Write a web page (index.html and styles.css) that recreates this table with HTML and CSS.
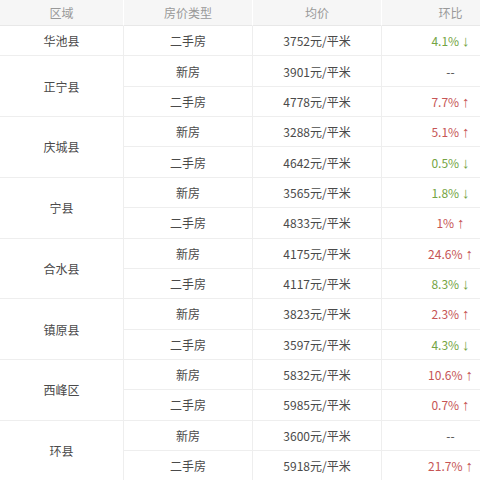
FILE: index.html
```html
<!DOCTYPE html>
<html lang="zh">
<head>
<meta charset="utf-8">
<link rel="stylesheet" href="styles.css">
</head>
<body>
<div class="frame">
<div class="table">
  <div class="th">区域</div><div class="th">房价类型</div><div class="th">均价</div><div class="th">环比</div>

  <div class="td region">华池县</div>
  <div class="td">二手房</div><div class="td">3752元/平米</div><div class="td down">4.1%<span class="arr">↓</span></div>

  <div class="td region r2">正宁县</div>
  <div class="td">新房</div><div class="td">3901元/平米</div><div class="td">--</div>
  <div class="td">二手房</div><div class="td">4778元/平米</div><div class="td up">7.7%<span class="arr">↑</span></div>

  <div class="td region r2">庆城县</div>
  <div class="td">新房</div><div class="td">3288元/平米</div><div class="td up">5.1%<span class="arr">↑</span></div>
  <div class="td">二手房</div><div class="td">4642元/平米</div><div class="td down">0.5%<span class="arr">↓</span></div>

  <div class="td region r2">宁县</div>
  <div class="td">新房</div><div class="td">3565元/平米</div><div class="td down">1.8%<span class="arr">↓</span></div>
  <div class="td">二手房</div><div class="td">4833元/平米</div><div class="td up">1%<span class="arr">↑</span></div>

  <div class="td region r2">合水县</div>
  <div class="td">新房</div><div class="td">4175元/平米</div><div class="td up">24.6%<span class="arr">↑</span></div>
  <div class="td">二手房</div><div class="td">4117元/平米</div><div class="td down">8.3%<span class="arr">↓</span></div>

  <div class="td region r2">镇原县</div>
  <div class="td">新房</div><div class="td">3823元/平米</div><div class="td up">2.3%<span class="arr">↑</span></div>
  <div class="td">二手房</div><div class="td">3597元/平米</div><div class="td down">4.3%<span class="arr">↓</span></div>

  <div class="td region r2">西峰区</div>
  <div class="td">新房</div><div class="td">5832元/平米</div><div class="td up">10.6%<span class="arr">↑</span></div>
  <div class="td">二手房</div><div class="td">5985元/平米</div><div class="td up">0.7%<span class="arr">↑</span></div>

  <div class="td region r2">环县</div>
  <div class="td">新房</div><div class="td">3600元/平米</div><div class="td">--</div>
  <div class="td">二手房</div><div class="td">5918元/平米</div><div class="td up">21.7%<span class="arr">↑</span></div>
</div>
</div>
</body>
</html>
```
FILE: styles.css
```css
html, body {
  margin: 0;
  padding: 0;
  background: #fff;
}
.frame {
  width: 480px;
  height: 480px;
  overflow: hidden;
}
.table {
  display: grid;
  grid-template-columns: 124px 129px 129px 138px;
  grid-template-rows: 26px repeat(15, 30.36px);
  grid-auto-flow: row dense;
  width: 520px;
  font-family: "Noto Sans CJK SC", "Microsoft YaHei", sans-serif;
  font-size: 12px;
}
.th, .td {
  display: flex;
  align-items: center;
  justify-content: center;
  box-sizing: border-box;
  border-right: 1px solid #eeeeee;
  border-bottom: 1px solid #eeeeee;
  white-space: nowrap;
}
.th {
  background: #f6f6f6;
  color: #999;
  border-right-color: #fff;
  border-bottom-color: #e8e8e8;
}
.td {
  color: #4a4a4a;
}
.region {
  grid-column: 1;
}
.r2 {
  grid-row: span 2;
}
.arr {
  font-family: "Liberation Sans", sans-serif;
  font-size: 15px;
  line-height: 1;
  margin-left: 3px;
}
.up {
  color: #c65555;
}
.down {
  color: #74a444;
}
```
